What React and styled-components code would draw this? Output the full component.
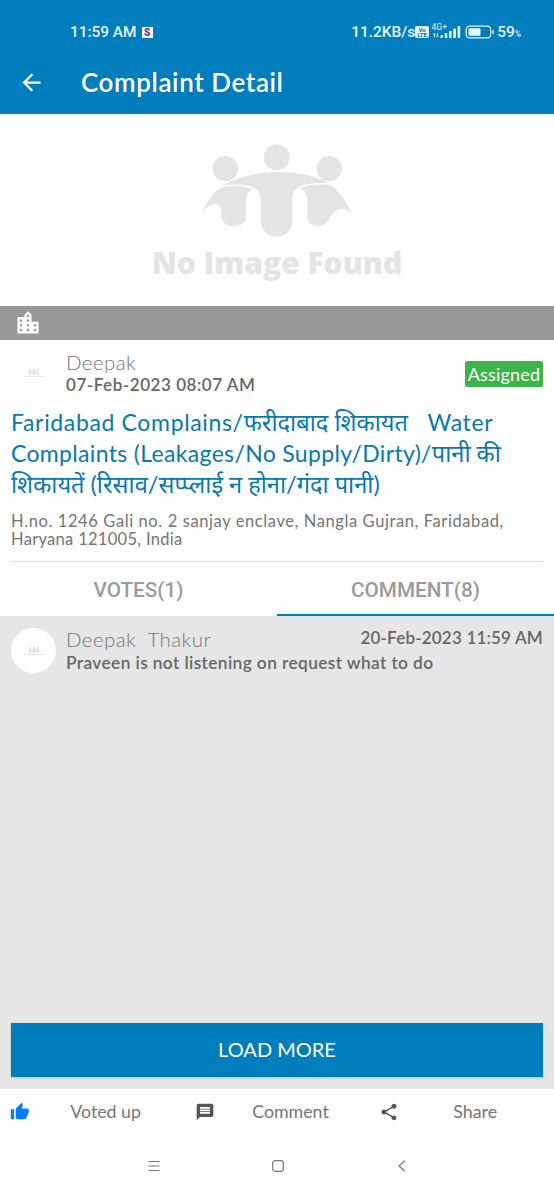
import { useState } from "react";
import styled, { createGlobalStyle } from "styled-components";
import { MdArrowBack, MdLocationCity, MdMessage, MdShare, MdThumbUp } from "react-icons/md";

const comments = [
  {
    id: 1,
    name: "Deepak\u00a0 Thakur",
    date: "20-Feb-2023 11:59 AM",
    text: "Praveen is not listening on request what to do",
  },
];

function People({ width, color }) {
  return (
    <svg width={width} height={(width * 290) / 455} viewBox="185 35 455 290" fill={color}>
      <circle cx="412" cy="81" r="39" />
      <circle cx="258" cy="115" r="38" />
      <circle cx="570" cy="115" r="38" />
      <path d="M254 164 C340 115 485 112 566 158 C515 157 459 160 459 205 V270 C459 302 438 319 412 319 C386 319 365 302 365 270 V213 C365 166 320 158 254 164 Z" />
      <path d="M188 250 C202 212 226 180 252 169 C282 165 318 167 340 176 C325 183 320 195 320 212 V254 C320 277 306 287 283 287 C260 287 246 277 246 254 C246 237 244 221 228 221 C211 222 199 234 188 250 Z" />
      <path d="M636 250 C622 212 598 180 572 164 C542 161 506 163 482 173 C497 180 504 192 504 210 V258 C504 278 516 287 536 287 C556 287 565 276 571 263 C580 246 593 237 606 236 C619 236 628 241 636 250 Z" />
    </svg>
  );
}

function SignalIcons() {
  return (
    <svg width="80" height="18" viewBox="0 0 80 18" fill="#e6f6fd">
      <rect x="0" y="3" width="14" height="12" rx="2" />
      <text x="7" y="8.8" fontSize="6" fontWeight="700" textAnchor="middle" fill="#0a6fa8">Vo</text>
      <text x="7" y="14.2" fontSize="6" fontWeight="700" textAnchor="middle" fill="#0a6fa8">LTE</text>
      <text x="16.5" y="7.3" fontSize="8.6">4G+</text>
      <path d="M18 11.5l1.4-1.5 1.4 1.5h-.9v3h-1v-3zM21 13l1.4 1.5 1.4-1.5h-.9v-3h-1v3z" />
      <rect x="25.5" y="12" width="2.3" height="3" rx=".6" />
      <rect x="29.7" y="10" width="2.6" height="5" rx=".6" />
      <rect x="34" y="8" width="2.6" height="7" rx=".6" />
      <rect x="38.3" y="5.5" width="2.6" height="9.5" rx=".6" />
      <rect x="42.6" y="3" width="2.6" height="12" rx=".6" />
      <rect x="51.2" y="3.2" width="24.5" height="11.6" rx="3.5" fill="none" stroke="#e6f6fd" strokeWidth="1.3" />
      <rect x="53.5" y="5.3" width="12" height="7.4" rx="1" />
      <rect x="77.3" y="7" width="1.5" height="4" rx=".7" />
    </svg>
  );
}

function App() {
  const [tab, setTab] = useState("comment");

  return (
    <Screen>
      <GlobalStyle />
      <Header>
        <StatusBar>
          <Clock>11:59 AM</Clock>
          <AppBadge>S</AppBadge>
          <Speed>11.2KB/s</Speed>
          <SignalIcons />
          <Battery>59<small>%</small></Battery>
        </StatusBar>
        <Toolbar>
          <MdArrowBack size={27} />
          <h1>Complaint Detail</h1>
        </Toolbar>
      </Header>

      <Placeholder>
        <People width={151.6} color="#e4e4e4" />
        <p>No Image Found</p>
      </Placeholder>
      <CategoryBar>
        <MdLocationCity size={28} />
      </CategoryBar>

      <Complaint>
        <Author>
          <Avatar>
            <People width={12} color="#dcdcdc" />
            <span />
          </Avatar>
          <AuthorText>
            <Name>Deepak</Name>
            <Stamp $track={0.55}>07-Feb-2023 08:07 AM</Stamp>
          </AuthorText>
          <Status>Assigned</Status>
        </Author>
        <Title>
          <Line $track={0.65}>Faridabad Complains/<Hindi>फरीदाबाद शिकायत</Hindi>&nbsp;&nbsp; Water</Line>
          <Line $track={0.33}>Complaints (Leakages/No Supply/Dirty)/<Hindi>पानी की</Hindi></Line>
          <Line $track={0}><Hindi>शिकायतें (रिसाव/सप्प्लाई न होना/गंदा पानी)</Hindi></Line>
        </Title>
        <Address>
          <Line $track={0.6}>H.no. 1246 Gali no. 2 sanjay enclave, Nangla Gujran, Faridabad,</Line>
          <Line $track={0.3}>Haryana 121005, India</Line>
        </Address>
      </Complaint>

      <Tabs>
        <Tab $active={tab === "votes"} onClick={() => setTab("votes")}>VOTES(1)</Tab>
        <Tab $active={tab === "comment"} onClick={() => setTab("comment")}>COMMENT(8)</Tab>
      </Tabs>

      <Feed>
        {comments.map((comment) => (
          <Comment key={comment.id}>
            <Avatar>
              <People width={12} color="#dcdcdc" />
              <span />
            </Avatar>
            <CommentBody>
              <CommentTop>
                <Name>{comment.name}</Name>
                <Stamp $track={0.2}>{comment.date}</Stamp>
              </CommentTop>
              <Message>{comment.text}</Message>
            </CommentBody>
          </Comment>
        ))}
        <LoadMore>LOAD MORE</LoadMore>
      </Feed>

      <Actions>
        <Action $color="#0a7cf5">
          <MdThumbUp size={19.6} />
          <span>Voted up</span>
        </Action>
        <Action>
          <MdMessage size={20} />
          <span>Comment</span>
        </Action>
        <Action>
          <MdShare size={20} />
          <span>Share</span>
        </Action>
      </Actions>

      <SystemNav>
        <svg width="12" height="12" viewBox="0 0 12 12"><path d="M.5 1.5h11M.5 6h11M.5 10.5h11" /></svg>
        <svg width="12" height="12" viewBox="0 0 12 12"><rect x=".7" y=".7" width="10.6" height="10.6" rx="2.5" /></svg>
        <svg width="12" height="12" viewBox="0 0 12 12"><path d="M8.8 .7L3 6l5.8 5.3" /></svg>
      </SystemNav>
    </Screen>
  );
}

const GlobalStyle = createGlobalStyle`
  * {
    box-sizing: border-box;
  }
  body {
    margin: 0;
    background: #fff;
  }
  h1, h2, p {
    margin: 0;
  }
  button {
    border: 0;
    padding: 0;
    background: none;
  }
  svg {
    flex: none;
  }
`;

const Screen = styled.div`
  width: 554px;
  height: 1200px;
  display: flex;
  flex-direction: column;
  overflow: hidden;
  background: #fefefe;
  color: #757575;
  font-family: Lato, "Noto Sans", "Noto Sans Devanagari", sans-serif;
  white-space: nowrap;
`;

const Header = styled.header`
  height: 114px;
  background: #007dbd;
  color: #fff;
  flex: none;
`;

const StatusBar = styled.div`
  height: 51px;
  padding: 13px 33px 0 70px;
  display: flex;
  align-items: center;
  font-family: Roboto, sans-serif;
  font-size: 15.4px;
  color: #e6f6fd;
`;

const Clock = styled.span`
  font-weight: 500;
`;

const AppBadge = styled.span`
  width: 11px;
  height: 11px;
  margin-left: 5px;
  background: #fff;
  color: #5a2fc0;
  font-size: 10px;
  font-weight: 900;
  line-height: 11px;
  text-align: center;
`;

const Speed = styled.span`
  margin-left: auto;
  font-weight: 500;
`;

const Battery = styled.span`
  margin-left: 2px;
  font-weight: 500;
  small {
    font-size: 8.5px;
  }
`;

const Toolbar = styled.div`
  height: 63px;
  padding-left: 18px;
  display: flex;
  align-items: center;
  h1 {
    margin-left: 36px;
    padding-bottom: 2px;
    font-size: 26px;
    line-height: 30px;
    font-weight: 600;
    letter-spacing: 0.6px;
  }
`;

const Placeholder = styled.div`
  height: 192px;
  padding: 28px 0 0;
  display: flex;
  flex-direction: column;
  align-items: center;
  flex: none;
  p {
    margin-top: 4px;
    font-family: "Open Sans", sans-serif;
    font-size: 30px;
    line-height: 40px;
    font-weight: 800;
    color: #e4e4e4;
  }
`;

const CategoryBar = styled.div`
  height: 34px;
  padding: 3px 0 0 14px;
  background: #999;
  color: #fff;
  flex: none;
`;

const Complaint = styled.section`
  height: 222px;
  margin: 0 11px;
  padding-top: 10px;
  border-bottom: 1px solid #dedede;
  flex: none;
`;

const Author = styled.div`
  display: flex;
  height: 57px;
`;

const Avatar = styled.div`
  width: 45px;
  height: 45px;
  margin-right: 10px;
  border-radius: 50%;
  background: #fefefe;
  display: flex;
  flex-direction: column;
  align-items: center;
  justify-content: center;
  gap: 1px;
  flex: none;
  span {
    width: 20px;
    height: 1px;
    background: #e6e6e6;
  }
`;

const AuthorText = styled.div`
  flex: 1;
`;

const Name = styled.div`
  font-size: 20.5px;
  line-height: 24px;
  font-weight: 300;
  letter-spacing: 0.4px;
`;

const Stamp = styled.div`
  font-size: 17px;
  line-height: 22px;
  font-weight: 600;
  letter-spacing: ${(props) => props.$track}px;
  color: #666;
`;

const Status = styled.span`
  width: 78px;
  height: 26px;
  margin-top: 11px;
  border-radius: 2px;
  background: #39b54a;
  color: #fff;
  font-size: 18px;
  line-height: 26px;
  letter-spacing: 0.2px;
  text-align: center;
`;

const Title = styled.h2`
  font-size: 23px;
  line-height: 31px;
  font-weight: 400;
  color: #0878b0;
`;

const Line = styled.div`
  letter-spacing: ${(props) => props.$track}px;
`;

const Hindi = styled.span`
  font-size: 23.6px;
  letter-spacing: 0;
`;

const Address = styled.div`
  margin-top: 12px;
  font-size: 16.5px;
  line-height: 18px;
`;

const Tabs = styled.div`
  height: 54px;
  display: grid;
  grid-template-columns: 1fr 1fr;
  flex: none;
`;

const Tab = styled.button`
  padding-top: 3px;
  border-bottom: 2px solid ${(props) => (props.$active ? "#007dbd" : "transparent")};
  color: #9b9b9b;
  font-family: Roboto, sans-serif;
  font-size: 20.7px;
  font-weight: 500;
`;

const Feed = styled.main`
  height: 473px;
  padding: 12px 11px;
  background: #e6e6e6;
  display: flex;
  flex-direction: column;
  flex: none;
`;

const Comment = styled.article`
  display: flex;
`;

const CommentBody = styled.div`
  flex: 1;
  margin-top: -1px;
`;

const CommentTop = styled.div`
  display: flex;
  justify-content: space-between;
`;

const Message = styled.p`
  font-size: 17.3px;
  line-height: 24px;
  font-weight: 600;
  letter-spacing: 0.4px;
  color: #666;
`;

const LoadMore = styled.button`
  height: 54px;
  margin-top: auto;
  padding-bottom: 2px;
  background: #007dbd;
  box-shadow: 0 1px 2px rgba(0, 0, 0, 0.2);
  color: #fff;
  font-family: Lato, sans-serif;
  font-size: 20px;
`;

const Actions = styled.footer`
  height: 45px;
  display: grid;
  grid-template-columns: repeat(3, 1fr);
  flex: none;
`;

const Action = styled.div`
  padding: 0 0 0 10px;
  display: flex;
  align-items: center;
  font-size: 17.8px;
  svg {
    color: ${(props) => props.$color || "#555"};
  }
  span {
    flex: 1;
    margin-left: -3px;
    padding-bottom: 2px;
    text-align: center;
  }
`;

const SystemNav = styled.nav`
  height: 66px;
  padding: 0 146px 2px 148px;
  display: flex;
  align-items: center;
  justify-content: space-between;
  svg {
    fill: none;
    stroke: #777;
    stroke-width: 1.2;
  }
`;

export default App;
